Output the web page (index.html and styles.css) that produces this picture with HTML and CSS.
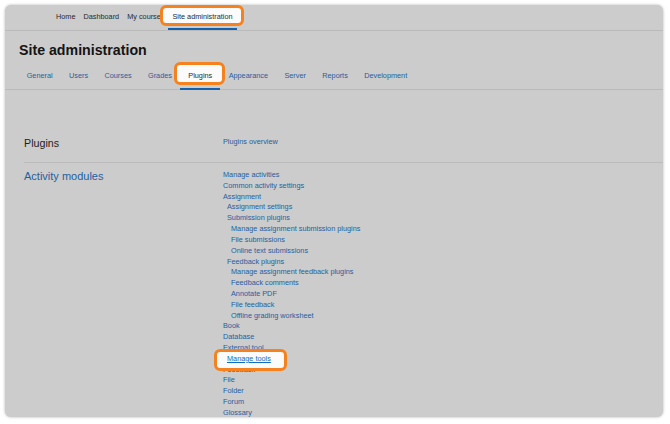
FILE: index.html
```html
<!DOCTYPE html>
<html>
<head>
    <meta charset="UTF-8">
    <title>Site administration</title>
    <link rel="stylesheet" href="styles.css">
</head>
<body>
    <div id="page">
        <nav id="top-nav">
            <a class="nav-link">Home</a>
            <a class="nav-link">Dashboard</a>
            <a class="nav-link">My courses</a>
            <a class="nav-link active callout"><span>Site administration</span></a>
        </nav>

        <h1 class="page-title">Site administration</h1>

        <div id="tabs">
            <a class="tab-link">General</a>
            <a class="tab-link">Users</a>
            <a class="tab-link">Courses</a>
            <a class="tab-link">Grades</a>
            <a class="tab-link active callout"><span>Plugins</span></a>
            <a class="tab-link">Appearance</a>
            <a class="tab-link">Server</a>
            <a class="tab-link">Reports</a>
            <a class="tab-link">Development</a>
        </div>

        <div class="admin-row first-row">
            <h2 class="row-title">Plugins</h2>
            <ul class="link-list">
                <li><a>Plugins overview</a></li>
            </ul>
        </div>

        <div class="admin-row">
            <h2 class="row-title category">Activity modules</h2>
            <ul class="link-list">
                <li><a>Manage activities</a></li>
                <li><a>Common activity settings</a></li>
                <li><a>Assignment</a></li>
                <li class="lvl-2"><a>Assignment settings</a></li>
                <li class="lvl-2"><a>Submission plugins</a></li>
                <li class="lvl-3"><a>Manage assignment submission plugins</a></li>
                <li class="lvl-3"><a>File submissions</a></li>
                <li class="lvl-3"><a>Online text submissions</a></li>
                <li class="lvl-2"><a>Feedback plugins</a></li>
                <li class="lvl-3"><a>Manage assignment feedback plugins</a></li>
                <li class="lvl-3"><a>Feedback comments</a></li>
                <li class="lvl-3"><a>Annotate PDF</a></li>
                <li class="lvl-3"><a>File feedback</a></li>
                <li class="lvl-3"><a>Offline grading worksheet</a></li>
                <li><a>Book</a></li>
                <li><a>Database</a></li>
                <li><a>External tool</a></li>
                <li class="lvl-2"><a class="callout tools-link"><span>Manage tools</span></a></li>
                <li><a>Feedback</a></li>
                <li><a>File</a></li>
                <li><a>Folder</a></li>
                <li><a>Forum</a></li>
                <li><a>Glossary</a></li>
            </ul>
        </div>
    </div>
</body>
</html>
```

FILE: styles.css
```css
body {
    margin: 0;
    background-color: #fff;
    font-family: "Liberation Sans", Arial, sans-serif;
}

#page {
    margin: 5px;
    width: 658px;
    height: 412px;
    background-color: #ccc;
    border-radius: 6px;
    box-shadow: 0 0 3px rgba(0, 0, 0, 0.3);
    overflow: hidden;
}

a {
    color: #1f60a0;
    text-decoration: none;
}

/* top navigation */
#top-nav {
    display: flex;
    height: 25px;
    padding-left: 47px;
    border-bottom: 1px solid #bababa;
}

.nav-link {
    padding: 0 4px;
    height: 23px;
    line-height: 23px;
    font-size: 7.3px;
    color: #2a2a2a;
    border-bottom: 2px solid transparent;
}

.nav-link.active {
    border-bottom-color: #1560a8;
}

.page-title {
    margin: 10px 0 0 14px;
    font-size: 14.2px;
    line-height: 18px;
    font-weight: bold;
    color: #141414;
}

/* tabs */
#tabs {
    display: flex;
    margin-top: 3px;
    padding-left: 13.5px;
    border-bottom: 1px solid #bababa;
}

.tab-link {
    padding: 9px 8.2px 7px;
    line-height: 10px;
    font-size: 7.3px;
    border-bottom: 2px solid transparent;
    margin-bottom: -1px;
}

.tab-link.active {
    color: #2a2a2a;
    border-bottom-color: #1560a8;
}

/* orange call-out boxes */
.callout {
    position: relative;
}

.callout::before {
    content: "";
    position: absolute;
    border: 3px solid #f5821f;
    border-radius: 6px;
    background-color: #fbfbfb;
}

.callout span {
    position: relative;
}

.nav-link.callout::before {
    left: -8px;
    right: -7px;
    top: 0;
    bottom: 2px;
}

.tab-link.callout::before {
    left: -6px;
    right: -5px;
    top: 0;
    bottom: 3px;
}

.tools-link {
    display: inline-block;
    color: #0f6cbf;
    text-decoration: underline;
}

.tools-link::before {
    left: -13px;
    right: -16px;
    top: -5px;
    bottom: -6px;
}

/* settings rows */
.admin-row {
    display: grid;
    grid-template-columns: 199px 1fr;
    margin-left: 19px;
    padding-top: 7px;
    border-bottom: 1px solid #bababa;
}

.admin-row.first-row {
    padding: 47px 0 13px;
}

.row-title {
    margin: 0;
    font-size: 10.7px;
    line-height: 12px;
    font-weight: normal;
    color: #1d1d1d;
}

.row-title.category {
    font-size: 11px;
    color: #1f60a0;
}

.link-list {
    list-style: none;
    margin: 0;
    padding: 0;
}

.link-list li {
    font-size: 7.3px;
    line-height: 10.82px;
}

.link-list .lvl-2 {
    padding-left: 4px;
}

.link-list .lvl-3 {
    padding-left: 8px;
}
```
